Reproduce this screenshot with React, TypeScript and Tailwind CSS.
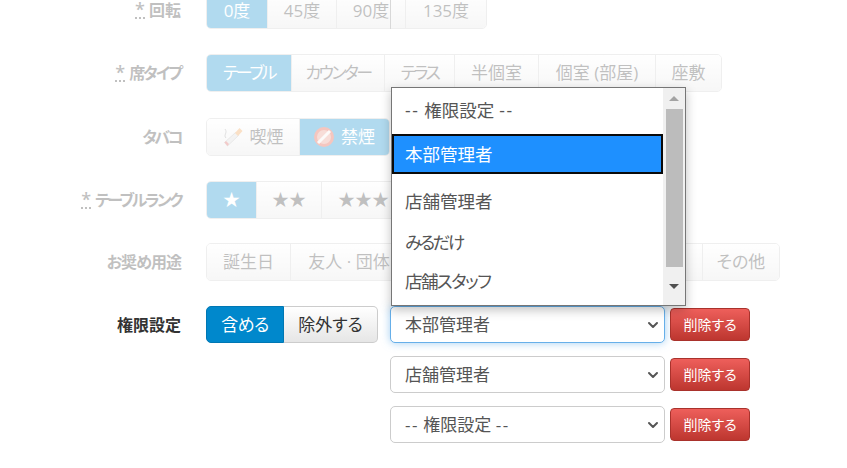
import React from 'react';
import { ChevronDown } from 'lucide-react';

const jp = "font-['Open_Sans','Noto_Sans_CJK_JP',sans-serif] [font-feature-settings:'palt']";

type Seg = { label?: React.ReactNode; w: string; active?: boolean; t?: string };

const Label: React.FC<{ required?: boolean; text: string; t?: string }> = ({ required, text, t }) => (
  <div className="w-[182px] shrink-0 pt-[9px] pr-px text-right text-base leading-5 font-semibold text-[#333]">
    {required && (
      <span className="mr-[4px] inline-block w-[10px] border-b-2 border-dotted border-[#333] text-center text-lg leading-[15px]">*</span>
    )}
    <span className={t}>{text}</span>
  </div>
);

const Group: React.FC<{ items: Seg[] }> = ({ items }) => (
  <div className="ml-6 flex h-[38px] rounded-[5px] border border-[#ccc]">
    {items.map((s, i) => (
      <div
        key={i}
        className={`flex items-center justify-center text-[17px] leading-[18px] whitespace-nowrap ${s.w} ${s.t ?? ''} ${i > 0 ? 'border-l border-[#ccc]' : ''} ${
          s.active ? 'bg-[#0088cc] text-white' : 'bg-gradient-to-b from-white to-[#e6e6e6] text-[#333]'
        } ${i === 0 ? 'rounded-l-[4px]' : ''} ${i === items.length - 1 ? 'rounded-r-[4px]' : ''}`}
      >
        {s.label}
      </div>
    ))}
  </div>
);

const Cigarette = () => (
  <svg viewBox="0 0 20 20" className="mr-[7px] h-5 w-5">
    <path d="M1.5 15.5 L12.5 5.5 L15.5 8.5 L4.5 19 Z" fill="#d8d8d8" stroke="#888" strokeWidth="0.5" />
    <path d="M12 6 L16.5 1 L19.5 4 L15 9 Z" fill="#f09a45" />
    <path d="M1.5 15.5 L3 14 L6 17 L4.5 19 Z" fill="#d9534f" />
    <path d="M3 11 C0 8 5 6 2 2" fill="none" stroke="#999" strokeWidth="1" />
  </svg>
);

const NoSmoke = () => (
  <svg viewBox="0 0 20 20" className="mr-[7px] h-5 w-5">
    <circle cx="10" cy="10" r="8.5" fill="#e8927f" stroke="#e0442e" strokeWidth="3" />
    <path d="M4 16 L16 4" stroke="#f6f0ee" strokeWidth="3" />
  </svg>
);

const Dash = () => <span className="tracking-[1.5px]">--</span>;

const Placeholder = () => (
  <>
    <Dash /> 権限設定 <Dash />
  </>
);

const Select: React.FC<{ text: React.ReactNode; focus?: boolean }> = ({ text, focus }) => (
  <div
    className={`flex h-[37px] w-[275px] items-center justify-between rounded-[5px] border bg-white pr-[3px] pl-[14px] text-[17px] text-[#555] ${
      focus ? 'border-[#66afe9] shadow-[0_0_8px_rgba(102,175,233,0.6)]' : 'border-[#ccc]'
    }`}
  >
    <span>{text}</span>
    <ChevronDown size={16} strokeWidth={3} className="text-[#555]" />
  </div>
);

const DeleteBtn = () => (
  <div className="ml-[5px] flex h-[33px] w-20 items-center justify-center rounded-[4px] border border-[#a9322c] bg-gradient-to-b from-[#ee5f5b] to-[#bd362f] text-sm text-white">
    削除する
  </div>
);

const Dropdown = () => (
  <div className="absolute top-[87px] left-[391px] flex h-[219px] w-[295px] border border-[#767676] bg-white text-[17.5px] text-[#555] shadow-[0_4px_10px_rgba(0,0,0,0.25)]">
    <div className="w-[272px]">
      <div className="flex h-[46px] items-center gap-[5px] pb-[2px] pl-[13px]">
        <Dash />
        <span>権限設定</span>
        <Dash />
      </div>
      <div className="flex h-10 items-center border-[2px] border-[#0a0a0a] bg-[#1e90ff] pl-[11px] text-white">本部管理者</div>
      <div className="flex h-[54px] items-center pl-[13px]">店舗管理者</div>
      <div className="flex h-[28px] items-center pl-[13px] tracking-[-2.5px]">みるだけ</div>
      <div className="flex h-[50px] items-center pl-[13px] tracking-[-1.5px]">店舗スタッフ</div>
    </div>
    <div className="flex w-[22px] flex-col items-center bg-[#f0f0f0] px-[2px]">
      <div className="flex h-[21px] items-center">
        <div className="h-0 w-0 border-x-[5px] border-b-[5px] border-x-transparent border-b-[#a3a3a3]" />
      </div>
      <div className="h-[158px] w-[17px] bg-[#bcbcbc]" />
      <div className="flex flex-1 items-center">
        <div className="h-0 w-0 border-x-[5px] border-t-[5px] border-x-transparent border-t-[#505050]" />
      </div>
    </div>
  </div>
);

export default function App() {
  return (
    <div className={`relative h-[468px] w-[847px] overflow-hidden bg-white ${jp}`}>
      <div className="-mt-[9px] flex flex-col">
        <div className="flex flex-col opacity-30">
          <div className="flex h-[63px]">
            <Label required text="回転" />
            <Group
              items={[
                { label: '0度', w: 'w-[60px] pt-[2px]', active: true },
                { label: '45度', w: 'w-[69px] pt-[2px]' },
                { label: '90度', w: 'w-[69px] pt-[2px]' },
                { label: '135度', w: 'w-[81px] pt-[2px]' },
              ]}
            />
          </div>
          <div className="flex h-[64px]">
            <Label required text="席タイプ" t="tracking-[-2px]" />
            <Group
              items={[
                { label: 'テーブル', w: 'w-[84px]', active: true, t: 'tracking-[-2.5px]' },
                { label: 'カウンター', w: 'w-[93px]', t: 'tracking-[-2.5px]' },
                { label: 'テラス', w: 'w-[70px]', t: 'tracking-[-2.5px]' },
                { label: '半個室', w: 'w-[84px]' },
                { label: '個室 (部屋)', w: 'w-[117px]' },
                { label: '座敷', w: 'w-[66px]' },
              ]}
            />
          </div>
          <div className="flex h-[63px]">
            <Label text="タバコ" t="tracking-[-2.5px]" />
            <Group
              items={[
                { label: <><Cigarette />喫煙</>, w: 'w-[92px]' },
                { label: <><NoSmoke />禁煙</>, w: 'w-[90px]', active: true },
              ]}
            />
          </div>
          <div className="flex h-[62px]">
            <Label required text="テーブルランク" t="tracking-[-2.5px]" />
            <Group
              items={[
                { label: '★', w: 'w-[49px]', active: true },
                { label: '★★', w: 'w-[65px]' },
                { label: '★★★', w: 'w-[84px]' },
                { w: 'w-[100px]' },
              ]}
            />
          </div>
          <div className="flex h-[63px]">
            <Label text="お奨め用途" t="tracking-[-1px]" />
            <Group
              items={[
                { label: '誕生日', w: 'w-[83px]' },
                { label: '友人 · 団体', w: 'w-[117px]' },
                { w: 'w-[98px]' },
                { w: 'w-[84px]' },
                { w: 'w-[113px]' },
                { label: 'その他', w: 'w-[77px]' },
              ]}
            />
          </div>
        </div>

        <div className="flex">
          <Label text="権限設定" />
          <div className="ml-6 flex h-[37px] rounded-[5px]">
            <div className="flex w-[78px] items-center justify-center rounded-l-[5px] border border-[#0077b3] bg-[#0088cc] text-[17px] tracking-[-0.5px] text-white">
              含める
            </div>
            <div className="flex w-[94px] items-center justify-center rounded-r-[5px] border border-l-0 border-[#ccc] bg-gradient-to-b from-white to-[#e6e6e6] text-[17px] text-[#333]">
              除外する
            </div>
          </div>
          <div className="ml-3 flex flex-col gap-[13px]">
            {[
              { key: 'a', text: '本部管理者', focus: true },
              { key: 'b', text: '店舗管理者' },
              { key: 'c', text: <Placeholder /> },
            ].map((r) => (
              <div key={r.key} className="flex items-center">
                <Select text={r.text} focus={r.focus} />
                <DeleteBtn />
              </div>
            ))}
          </div>
        </div>
      </div>
      <div className="absolute top-0 left-[390px] h-[29px] w-px bg-[#d8d8d8]" />
      <Dropdown />
    </div>
  );
}
